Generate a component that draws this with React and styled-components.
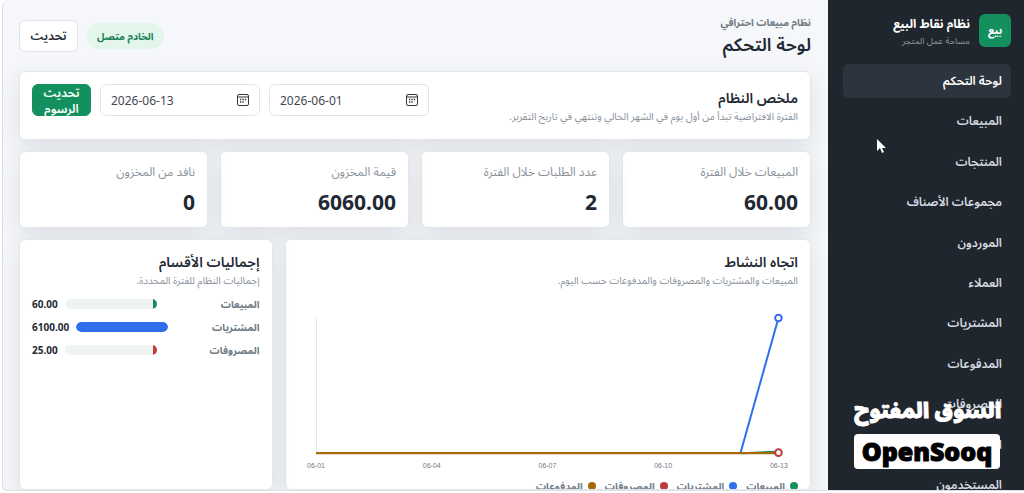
import { useState } from 'react'
import styled, { createGlobalStyle } from 'styled-components'

const GlobalStyle = createGlobalStyle`
    * {
        box-sizing: border-box;
    }

    body {
        margin: 0;
        background: #FFF;
        color: #1F2933;
        font-family: 'Noto Sans', 'Noto Sans Arabic', 'DejaVu Sans', sans-serif;
        overflow: hidden;
    }

    h1, h2, p {
        margin: 0;
    }

    button, input {
        font-family: inherit;
    }
`

const Janela = styled.div`
    display: flex;
    height: calc(100vh - 2px);
    margin-left: 2px;
    overflow: hidden;
    background: #F5F7FB;
    border: 1px solid #DCDFE3;
    border-width: 0 0 1px 1px;
    border-radius: 6px 0 0 6px;
`

const Lateral = styled.aside`
    flex: 0 0 196px;
    padding: 14px 13px 0 15px;
    background: #20262D;
    color: #FFF;
`

const Marca = styled.div`
    display: flex;
    align-items: center;
    gap: 9px;
    margin-bottom: 17px;
`

const MarcaSelo = styled.div`
    display: flex;
    align-items: center;
    justify-content: center;
    width: 32px;
    height: 33px;
    border-radius: 6px;
    background: #14905F;
    font-size: 11px;
    font-weight: 700;
`

const MarcaNome = styled.div`
    font-size: 12px;
    line-height: 20px;
    font-weight: 700;
`

const MarcaTexto = styled.div`
    color: #8D959E;
    font-size: 9px;
    line-height: 13px;
`

const Menu = styled.nav`
    display: grid;
    grid-auto-rows: 1fr;
    gap: 6px;
    min-height: 439px;
`

const MenuItem = styled.a`
    display: flex;
    align-items: center;
    padding: 0 9px;
    border-radius: 6px;
    background: ${({ $ativo }) => ($ativo ? '#2D343D' : 'transparent')};
    color: ${({ $ativo }) => ($ativo ? '#FFF' : '#D5DAE0')};
    font-size: 12px;
    font-weight: 600;
    text-decoration: none;
`

const Conteudo = styled.main`
    display: flex;
    flex: 1;
    flex-direction: column;
    gap: 11px;
    min-width: 0;
    padding: 12px 17px 0 16px;
`

const Topo = styled.header`
    display: flex;
    align-items: center;
    justify-content: space-between;
    height: 48px;
`

const TopoAcoes = styled.div`
    display: flex;
    align-items: center;
    gap: 9px;
`

const Chamada = styled.p`
    color: #717A84;
    font-size: 10px;
    line-height: 16px;
    font-weight: 700;
`

const Titulo = styled.h1`
    font-size: 18px;
    line-height: 28px;
    font-weight: 600;
`

const Status = styled.span`
    padding: 0 10px;
    border-radius: 13px;
    background: #E2F6EC;
    color: #1B7F57;
    font-size: 10px;
    line-height: 26px;
    font-weight: 700;
`

const Botao = styled.button`
    width: 59px;
    height: 32px;
    padding: 0 8px;
    border: 1px solid ${({ $principal }) => ($principal ? '#14905F' : '#E1E5EA')};
    border-radius: 6px;
    background: ${({ $principal }) => ($principal ? '#14905F' : '#FFF')};
    color: ${({ $principal }) => ($principal ? '#FFF' : '#1F2933')};
    font-size: 12px;
    line-height: 16px;
    font-weight: 600;
    cursor: pointer;
`

const Cartao = styled.section`
    padding: 12px;
    border: 1px solid #E3E6EA;
    border-radius: 6px;
    background: #FFF;
    box-shadow: 0 8px 24px rgba(30, 34, 36, 0.11);
`

const Resumo = styled(Cartao)`
    display: flex;
    align-items: flex-start;
    justify-content: space-between;
    height: 69px;
`

const Cabecalho = styled.div`
    padding-top: ${({ $recuo }) => ($recuo ? '4px' : '0')};
`

const Subtitulo = styled.h2`
    font-size: 14px;
    line-height: 20px;
    font-weight: 600;
`

const Descricao = styled.p`
    color: #87909A;
    font-size: 10px;
    line-height: 16px;
`

const Filtros = styled.form`
    display: flex;
    gap: 9px;
`

const Campo = styled.label`
    display: flex;
    align-items: center;
    width: 160px;
    height: 32px;
    padding: 0 10px;
    border: 1px solid #E1E5EA;
    border-radius: 6px;
    direction: ltr;
`

const CampoData = styled.input`
    flex: 1;
    min-width: 0;
    padding: 0;
    border: 0;
    outline: 0;
    background: transparent;
    color: #3F4852;
    font-size: 12px;
`

const Indicadores = styled.div`
    display: grid;
    grid-template-columns: repeat(4, 1fr);
    gap: 12px;
`

const Indicador = styled(Cartao)`
    height: 77px;
    padding: 9px 12px;
`

const IndicadorNome = styled.p`
    color: #87909A;
    font-size: 12px;
    line-height: 22px;
`

const IndicadorValor = styled.p`
    font-size: 21px;
    line-height: 38px;
    font-weight: 700;
`

const Paineis = styled.div`
    display: grid;
    flex: 1;
    grid-template-columns: 27fr 13fr;
    gap: 12px;
    min-height: 0;
`

const Painel = styled(Cartao)`
    min-width: 0;
    overflow: hidden;
`

const Grafico = styled.svg`
    display: block;
    width: 100%;
    margin-top: 6px;
    font-family: 'Liberation Sans', sans-serif;
    font-size: 7px;
`

const Legenda = styled.ul`
    display: flex;
    gap: 9px;
    margin: 0;
    padding: 0;
    list-style: none;
`

const LegendaItem = styled.li`
    display: flex;
    align-items: center;
    gap: 5px;
    color: #717A84;
    font-size: 10px;
    line-height: 16px;
    font-weight: 700;

    &::before {
        content: '';
        width: 8px;
        height: 8px;
        border-radius: 50%;
        background: ${({ $cor }) => $cor};
    }
`

const Totais = styled.div`
    display: grid;
    gap: 7px;
    margin-top: 8px;
`

const TotalLinha = styled.div`
    display: grid;
    grid-template-columns: 1fr 92px auto;
    align-items: center;
    gap: 7px;
    font-size: 10px;
    line-height: 16px;
    font-weight: 700;
`

const TotalNome = styled.span`
    color: #717A84;
`

const Trilho = styled.div`
    height: 10px;
    overflow: hidden;
    border-radius: 5px;
    background: #F0F3F4;
`

const Barra = styled.div`
    min-width: 4px;
    height: 10px;
    border-radius: ${({ $cheia }) => ($cheia ? '5px' : '0')};
    background: ${({ $cor }) => $cor};
`

const MarcaDagua = styled.div`
    position: absolute;
    right: 24px;
    bottom: 24px;
    width: 146px;
    text-align: center;
`

const MarcaDaguaArabe = styled.div`
    color: #FFF;
    font-size: 21px;
    line-height: 36px;
    font-weight: 900;
    white-space: nowrap;
    -webkit-text-stroke: 1px #FFF;
    padding-bottom: 6px;
`

const MarcaDaguaLatim = styled.div`
    border-radius: 4px;
    background: #FFF;
    color: #000;
    font-family: 'Open Sans', 'Noto Sans', sans-serif;
    font-size: 25px;
    line-height: 35px;
    font-weight: 800;
    -webkit-text-stroke: 1px #000;
`

const Cursor = styled.svg`
    position: absolute;
    top: 138px;
    right: 138px;
`

const menu = [
    'لوحة التحكم',
    'المبيعات',
    'المنتجات',
    'مجموعات الأصناف',
    'الموردون',
    'العملاء',
    'المشتريات',
    'المدفوعات',
    'المصروفات',
    'التقارير',
    'المستخدمون',
]

const indicadores = [
    { nome: 'المبيعات خلال الفترة', valor: '60.00' },
    { nome: 'عدد الطلبات خلال الفترة', valor: '2' },
    { nome: 'قيمة المخزون', valor: '6060.00' },
    { nome: 'نافد من المخزون', valor: '0' },
]

const totais = [
    { nome: 'المبيعات', valor: 60, cor: '#14905F' },
    { nome: 'المشتريات', valor: 6100, cor: '#2F6FED' },
    { nome: 'المصروفات', valor: 25, cor: '#BE3B3B' },
]

const legenda = [
    { nome: 'المبيعات', cor: '#14905F' },
    { nome: 'المشتريات', cor: '#2F6FED' },
    { nome: 'المصروفات', cor: '#BE3B3B' },
    { nome: 'المدفوعات', cor: '#A66A0A' },
]

const dias = ['06-01', '06-04', '06-07', '06-10', '06-13']

function IconeCalendario () {
    return (
        <svg width="12" height="12" viewBox="0 0 12 12" fill="none" stroke="#30363C" aria-hidden="true">
            <rect x="0.5" y="0.5" width="11" height="11" rx="1.5" />
            <path d="M.5 3h11" />
            <path d="M3 5.5h1.3M5.4 5.5h1.3M7.8 5.5h1.3M3 8h1.3M5.4 8h1.3" strokeWidth="1.3" />
        </svg>
    )
}

function CampoPeriodo ({ rotulo, inicial }) {
    const [data, setData] = useState(inicial)

    return (
        <Campo>
            <CampoData aria-label={rotulo} value={data} onChange={(e) => setData(e.target.value)} />
            <IconeCalendario />
        </Campo>
    )
}

function GraficoAtividade () {
    return (
        <Grafico viewBox="0 0 500 184" role="img" aria-label="اتجاه النشاط" direction="ltr">
            <path d="M18.5 24v134" stroke="#E6E9EC" />
            <path d="M443 159L480 157.5" fill="none" stroke="#14905F" strokeWidth="2" />
            <path d="M442 159L480 24" fill="none" stroke="#2F6FED" strokeWidth="2" />
            <path d="M18 159H480" stroke="#A66A0A" strokeWidth="2.2" />
            <circle cx="480" cy="24" r="3.3" fill="#FFF" stroke="#2F6FED" strokeWidth="2" />
            <circle cx="480" cy="158.5" r="3.3" fill="#FFF" stroke="#BE3B3B" strokeWidth="2" />
            {dias.map((dia, i) => (
                <text key={dia} x={18 + i * 115.6} y="174" textAnchor="middle" fill="#717A84">{dia}</text>
            ))}
        </Grafico>
    )
}

function App () {
    const maior = Math.max(...totais.map((t) => t.valor))

    return (
        <>
            <GlobalStyle />
            <Janela dir="rtl" lang="ar">
                <Lateral>
                    <Marca>
                        <MarcaSelo>بيع</MarcaSelo>
                        <div>
                            <MarcaNome>نظام نقاط البيع</MarcaNome>
                            <MarcaTexto>مساحة عمل المتجر</MarcaTexto>
                        </div>
                    </Marca>
                    <Menu>
                        {menu.map((item, i) => (
                            <MenuItem key={item} href="#" $ativo={i === 0}>{item}</MenuItem>
                        ))}
                    </Menu>
                </Lateral>

                <Conteudo>
                    <Topo>
                        <div>
                            <Chamada>نظام مبيعات احترافي</Chamada>
                            <Titulo>لوحة التحكم</Titulo>
                        </div>
                        <TopoAcoes>
                            <Status>الخادم متصل</Status>
                            <Botao type="button">تحديث</Botao>
                        </TopoAcoes>
                    </Topo>

                    <Resumo>
                        <Cabecalho $recuo>
                            <Subtitulo>ملخص النظام</Subtitulo>
                            <Descricao>الفترة الافتراضية تبدأ من أول يوم في الشهر الحالي وتنتهي في تاريخ التقرير.</Descricao>
                        </Cabecalho>
                        <Filtros onSubmit={(e) => e.preventDefault()}>
                            <CampoPeriodo rotulo="من" inicial="2026-06-01" />
                            <CampoPeriodo rotulo="إلى" inicial="2026-06-13" />
                            <Botao type="submit" $principal>تحديث الرسوم</Botao>
                        </Filtros>
                    </Resumo>

                    <Indicadores>
                        {indicadores.map(({ nome, valor }) => (
                            <Indicador key={nome}>
                                <IndicadorNome>{nome}</IndicadorNome>
                                <IndicadorValor>{valor}</IndicadorValor>
                            </Indicador>
                        ))}
                    </Indicadores>

                    <Paineis>
                        <Painel>
                            <Subtitulo>اتجاه النشاط</Subtitulo>
                            <Descricao>المبيعات والمشتريات والمصروفات والمدفوعات حسب اليوم.</Descricao>
                            <GraficoAtividade />
                            <Legenda>
                                {legenda.map(({ nome, cor }) => (
                                    <LegendaItem key={nome} $cor={cor}>{nome}</LegendaItem>
                                ))}
                            </Legenda>
                        </Painel>
                        <Painel>
                            <Subtitulo>إجماليات الأقسام</Subtitulo>
                            <Descricao>إجماليات النظام للفترة المحددة.</Descricao>
                            <Totais>
                                {totais.map(({ nome, valor, cor }) => (
                                    <TotalLinha key={nome}>
                                        <TotalNome>{nome}</TotalNome>
                                        <Trilho>
                                            <Barra
                                                $cor={cor}
                                                $cheia={valor === maior}
                                                style={{ width: `${(valor / maior) * 100}%` }}
                                            />
                                        </Trilho>
                                        <span>{valor.toFixed(2)}</span>
                                    </TotalLinha>
                                ))}
                            </Totais>
                        </Painel>
                    </Paineis>
                </Conteudo>
            </Janela>

            <MarcaDagua lang="ar">
                <MarcaDaguaArabe>السوق المفتوح</MarcaDaguaArabe>
                <MarcaDaguaLatim>OpenSooq</MarcaDaguaLatim>
            </MarcaDagua>
            <Cursor width="10" height="16" viewBox="0 0 10 16" aria-hidden="true">
                <path d="M1 1v12l3-3 2 5 2-1-2-4h4z" fill="#FFF" />
            </Cursor>
        </>
    )
}

export default App
